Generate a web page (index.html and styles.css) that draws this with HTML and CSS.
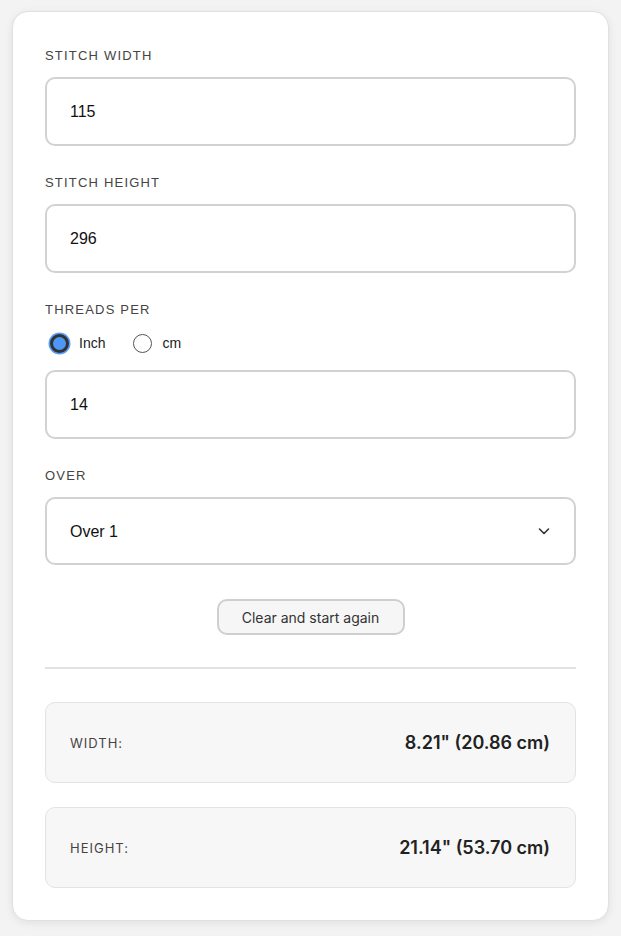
FILE: index.html
```html
<!DOCTYPE html>
<html lang="en">
<head>
  <meta charset="UTF-8">
  <title>Cross Stitch Size Calculator</title>
  <link rel="stylesheet" href="styles.css">
</head>
<body>

  <div class="card">
    <div class="field">
      <label class="field-label" for="width">Stitch Width</label>
      <input class="text-input" type="number" id="width" value="115">
    </div>

    <div class="field">
      <label class="field-label" for="height">Stitch Height</label>
      <input class="text-input" type="number" id="height" value="296">
    </div>

    <div class="field">
      <span class="field-label">Threads Per</span>
      <div class="radio-row">
        <label class="radio"><input type="radio" name="unit" value="inch" checked> Inch</label>
        <label class="radio"><input type="radio" name="unit" value="cm"> cm</label>
      </div>
      <input class="text-input" type="number" id="count" value="14">
    </div>

    <div class="field">
      <label class="field-label" for="over">Over</label>
      <div class="select-wrap">
        <select class="text-input" id="over">
          <option value="1">Over 1</option>
          <option value="2">Over 2</option>
        </select>
        <svg class="chevron" width="14" height="14" viewBox="0 0 14 14">
          <path d="M2.5 5 L7 9.5 L11.5 5" fill="none" stroke="#333" stroke-width="1.6" stroke-linecap="round" stroke-linejoin="round"/>
        </svg>
      </div>
    </div>

    <div class="actions">
      <button class="clear-btn" onclick="reset()">Clear and start again</button>
    </div>

    <hr class="divider">

    <div class="result">
      <span class="result-label">Width:</span>
      <span class="result-value" id="outWidth">8.21" (20.86 cm)</span>
    </div>

    <div class="result">
      <span class="result-label">Height:</span>
      <span class="result-value" id="outHeight">21.14" (53.70 cm)</span>
    </div>
  </div>

  <script>
    function reset() {
      document.getElementById("width").value = "";
      document.getElementById("height").value = "";
      document.getElementById("count").value = "";
      document.getElementById("outWidth").textContent = "";
      document.getElementById("outHeight").textContent = "";
    }
  </script>

</body>
</html>
```

FILE: styles.css
```css
body {
  font-family: 'Inter', sans-serif;
  background: #f3f3f3;
  margin: 0;
  padding: 11px 12px 16px;
  color: #222;
}

.card {
  background: #ffffff;
  border: 1px solid #e0e0e0;
  border-radius: 16px;
  padding: 36px 32px 32px;
  box-shadow: 0 2px 8px rgba(0, 0, 0, 0.08);
}

.field {
  margin-bottom: 29px;
}

.field-label {
  display: block;
  font-family: 'Liberation Sans', Arial, sans-serif;
  font-size: 13px;
  line-height: 16px;
  letter-spacing: 1.2px;
  text-transform: uppercase;
  color: #444;
  margin-bottom: 13px;
}

.text-input {
  display: block;
  box-sizing: border-box;
  width: 100%;
  height: 69px;
  padding: 0 23px;
  border: 2px solid #d2d2d2;
  border-radius: 10px;
  background: #fff;
  font-family: 'Liberation Sans', Arial, sans-serif;
  font-size: 16px;
  color: #111;
  outline: none;
}

.text-input::-webkit-outer-spin-button,
.text-input::-webkit-inner-spin-button {
  -webkit-appearance: none;
  margin: 0;
}

/* padding, not margin: the label's bottom margin would swallow it */
.radio-row {
  display: flex;
  gap: 28px;
  padding-top: 2px;
  margin: 0 0 17px 5px;
}

.radio {
  display: flex;
  align-items: center;
  gap: 10px;
  font-family: 'Liberation Sans', Arial, sans-serif;
  font-size: 14px;
  line-height: 20px;
  color: #222;
}

.radio input {
  -webkit-appearance: none;
  appearance: none;
  margin: 0;
  width: 19px;
  height: 19px;
  border: 1px solid #555;
  border-radius: 50%;
  background: #fff;
}

.radio input:checked {
  border: 3px solid #333;
  background: #4d97f7;
  box-shadow: 0 0 0 1.5px #5aa0f8;
}

.select-wrap {
  position: relative;
}

.select-wrap select {
  -webkit-appearance: none;
  appearance: none;
  height: 68px;
}

.chevron {
  position: absolute;
  right: 25px;
  top: 27px;
  pointer-events: none;
}

.actions {
  display: flex;
  justify-content: center;
  margin-top: 34px;
}

.clear-btn {
  width: 188px;
  height: 36px;
  border: 2px solid #cfcfcf;
  border-radius: 10px;
  background: #f6f6f6;
  font-family: 'Inter', sans-serif;
  font-size: 14px;
  color: #333;
  cursor: pointer;
}

.divider {
  border: none;
  border-top: 2px solid #e2e2e2;
  margin: 32px 0 33px;
}

.result {
  display: flex;
  justify-content: space-between;
  align-items: center;
  height: 81px;
  box-sizing: border-box;
  padding: 0 25px 0 24px;
  background: #f7f7f7;
  border: 1px solid #e3e3e3;
  border-radius: 10px;
  margin-bottom: 24px;
}

.result:last-child {
  margin-bottom: 0;
}

.result-label {
  font-size: 13px;
  letter-spacing: 1px;
  text-transform: uppercase;
  color: #444;
}

.result-value {
  font-size: 18px;
  font-weight: 600;
  color: #222;
}
```
